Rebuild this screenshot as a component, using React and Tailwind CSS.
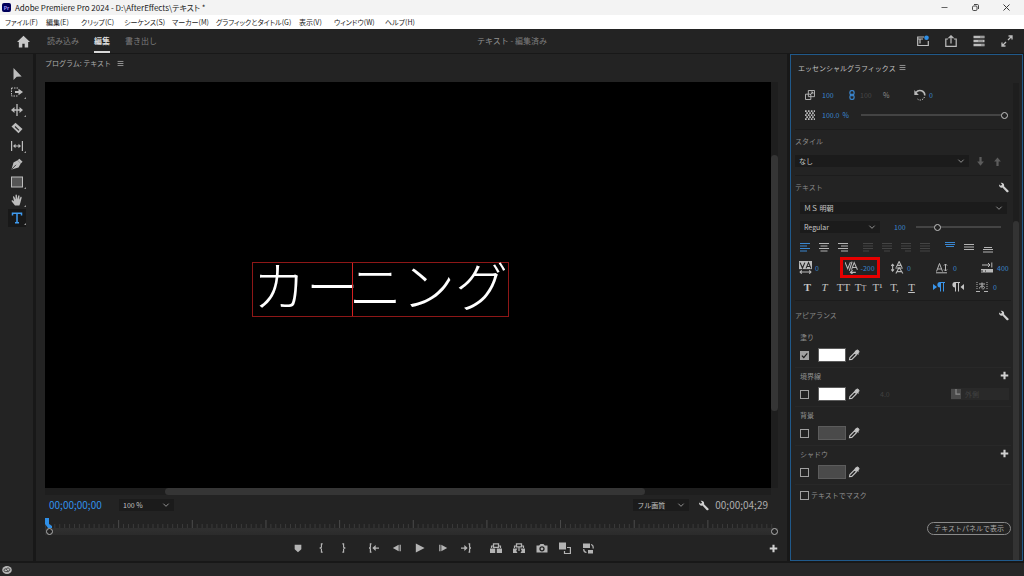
import { useState } from "react";

const menus = [
  "ファイル(F)",
  "編集(E)",
  "クリップ(C)",
  "シーケンス(S)",
  "マーカー(M)",
  "グラフィックとタイトル(G)",
  "表示(V)",
  "ウィンドウ(W)",
  "ヘルプ(H)",
];

function Icon({ size = 12, className = "", children }) {
  return (
    <svg
      width={size}
      height={size}
      viewBox="0 0 12 12"
      fill="none"
      stroke="currentColor"
      strokeWidth="1"
      className={`shrink-0 ${className}`}
      aria-hidden="true"
    >
      {children}
    </svg>
  );
}

function IconButton({ label, className = "", children }) {
  return (
    <button aria-label={label} className={`flex items-center justify-center ${className}`}>
      {children}
    </button>
  );
}

function Value({ children, className = "text-[#3a86cf]" }) {
  return <button className={`text-left text-[7px] leading-[10px] ${className}`}>{children}</button>;
}

function Select({ label, value, className = "" }) {
  return (
    <div className={`relative ${className}`}>
      <select
        aria-label={label}
        className="block h-[12px] w-full appearance-none bg-[#1b1b1b] pl-1 pr-4 text-[7px] leading-[12px] text-[#c4c4c4]"
      >
        <option>{value}</option>
      </select>
      <Icon size={8} className="pointer-events-none absolute right-1 top-[2px] text-[#9a9a9a]">
        <path d="M2 4l4 4 4-4" strokeWidth="1.4" />
      </Icon>
    </div>
  );
}

function Slider({ label, value, className = "" }) {
  return (
    <input
      type="range"
      aria-label={label}
      defaultValue={value}
      className={`h-[8px] min-w-0 appearance-none bg-transparent [&::-webkit-slider-runnable-track]:h-[2px] [&::-webkit-slider-runnable-track]:bg-[#444] [&::-webkit-slider-thumb]:-mt-[2px] [&::-webkit-slider-thumb]:size-[7px] [&::-webkit-slider-thumb]:appearance-none [&::-webkit-slider-thumb]:rounded-full [&::-webkit-slider-thumb]:border [&::-webkit-slider-thumb]:border-[#c4c4c4] [&::-webkit-slider-thumb]:bg-[#232323] ${className}`}
    />
  );
}

function Wrench() {
  return (
    <Icon size={11} className="text-[#d0d0d0]">
      <path
        d="M1.2 2.6l1.9 1.6 1.4-1.3L2.9.9C4.7.2 6.8 1.4 6.7 3.6l-.1.9 4.7 4.7c1 1.3-.9 2.8-1.9 1.7L4.9 6.1C2.9 6.9.7 5.1 1.2 2.6z"
        fill="currentColor"
        stroke="none"
      />
    </Icon>
  );
}

function Plus() {
  return (
    <Icon size={9} className="text-[#d0d0d0]">
      <path d="M6 1v10M1 6h10" strokeWidth="2.8" />
    </Icon>
  );
}

function Dropper() {
  return (
    <Icon size={12} className="text-[#c4c4c4]">
      <path d="M7 1.8l3.6 3.6M1.5 10.7l.4-2.2 4.7-4.7 1.9 1.9-4.7 4.7z" strokeWidth="1.1" />
      <path d="M6.8 3.2l1.7-1.9c1.1-1.1 3.3.9 2.2 2.2L8.9 5.3z" fill="currentColor" />
    </Icon>
  );
}

function Burger() {
  return (
    <Icon size={7} className="text-[#a8a8a8]">
      <path d="M1 2.5h10M1 6h10M1 9.5h10" strokeWidth="1.4" />
    </Icon>
  );
}

const tools = [
  ["選択", <path d="M2.5 0v12l3.200-3.200 5-.3z" fill="currentColor" stroke="none" />, false],
  [
    "トラックの前方選択",
    <>
      <path d="M.5 2h7M.5 2v8h7" strokeDasharray="1.5 1" />
      <path d="M4 6h4" strokeWidth="2" />
      <path d="M7.5 2.8L12 6 7.5 9.2z" fill="currentColor" stroke="none" />
    </>,
    true,
  ],
  [
    "リップル",
    <>
      <path d="M6 0v12M2 6h8" strokeWidth="1.3" />
      <path d="M0 6l3.5-3v6zM12 6L8.5 3v6z" fill="currentColor" stroke="none" />
    </>,
    true,
  ],
  [
    "レーザー",
    <>
      <path d="M.5 4.5L4.5.8l7 6.2-4 4.2z" fill="currentColor" stroke="none" />
      <path d="M4 4.5l4 3.8" stroke="#232323" strokeWidth="1.1" />
    </>,
    false,
  ],
  [
    "スリップ",
    <>
      <path d="M.6 1v10M11.4 1v10M3 6h6" strokeWidth="1.2" />
      <path d="M2 6l2.5-2.2v4.4zM10 6L7.5 3.8v4.4z" fill="currentColor" stroke="none" />
    </>,
    true,
  ],
  [
    "ペン",
    <>
      <path d="M.5 11.500L2.500 4.5l4-2.300 3.300 3.300-2.300 4z" fill="currentColor" stroke="none" />
      <path d="M7.5 1.500l3.200 3.200" strokeWidth="2.4" />
      <path d="M1 11l4-4.200" stroke="#232323" strokeWidth=".8" />
    </>,
    false,
  ],
  ["長方形", <rect x=".5" y="1" width="11" height="10" fill="#555" />, true],
  [
    "手のひら",
    <path
      d="M4 11.500L1 7.8C0 6.6 1.1 5.8 2 6.6l1.100 1L2 3.1c-.2-1 1-1.3 1.3-.4L4.6 5.5 4.5 1.3c0-1.100 1.3-1.100 1.4 0l.4 4L7.2 1.7c.2-.9 1.4-.7 1.3.3L8.2 5.8l1.2-2.500c.4-.8 1.5-.4 1.2.6L9.3 9.1 8.4 11.500z"
      fill="currentColor"
      stroke="none"
    />,
    true,
  ],
  [
    "横書き文字",
    <path d="M1.5 3.5V1.2h9v2.3M6 1.2v9.6M4 10.8h4" strokeWidth="1.5" />,
    true,
  ],
];

function Toolbar() {
  return (
    <nav className="flex w-[33px] shrink-0 flex-col items-center bg-[#232323] pt-[11px]">
      {tools.map(([label, art, more], i) => (
        <IconButton
          key={label}
          label={label}
          className={`relative h-[18px] w-[18px] ${
            i === 8 ? "bg-[#181818] text-[#3f9bf0]" : "text-[#bdbdbd]"
          }`}
        >
          <Icon size={12}>{art}</Icon>
          {more && (
            <svg
              width="2"
              height="2"
              className="absolute bottom-[2px] right-0 text-[#9a9a9a]"
              aria-hidden="true"
            >
              <path d="M2 0v2H0z" fill="currentColor" />
            </svg>
          )}
        </IconButton>
      ))}
    </nav>
  );
}

const markButtons = [
  ["マーカーを追加", <path d="M2 2h8v5.5L6 11 2 7.5z" fill="currentColor" stroke="none" />],
  ["インをマーク", <path d="M8 1H6.5v4L5 6l1.5 1v4H8" strokeWidth="1.4" />],
  ["アウトをマーク", <path d="M4 1h1.5v4L7 6 5.5 7v4H4" strokeWidth="1.4" />],
];
const playButtons = [
  [
    "インへ移動",
    <>
      <path d="M3 1H1.7v4L.5 6l1.2 1v4H3M6 6h6" strokeWidth="1.5" />
      <path d="M4 6l4-3.5v7z" fill="currentColor" stroke="none" />
    </>,
  ],
  [
    "1 フレーム前へ戻る",
    <>
      <path d="M1 6l7-4v8z" fill="currentColor" stroke="none" />
      <path d="M9.8 2v8" strokeWidth="1.5" />
    </>,
  ],
  ["再生", <path d="M1 .5L11.5 6 1 11.5z" fill="currentColor" stroke="none" />],
  [
    "1 フレーム先へ進む",
    <>
      <path d="M11 6L4 2v8z" fill="currentColor" stroke="none" />
      <path d="M2.2 2v8" strokeWidth="1.5" />
    </>,
  ],
  [
    "アウトへ移動",
    <>
      <path d="M9 1h1.3v4l1.2 1-1.2 1v4H9M0 6h6" strokeWidth="1.5" />
      <path d="M8 6L4 2.5v7z" fill="currentColor" stroke="none" />
    </>,
  ],
];
const editButtons = [
  [
    "リフト",
    <>
      <path d="M0 6.5h5.200V11H0zM6.800 6.5H12V11H6.800z" fill="currentColor" stroke="none" />
      <path d="M3.5 1.800h5v3.500h-5z" strokeWidth="1.3" />
      <path d="M1.5 6V4h2M10.5 6V4h-2" strokeWidth="1.2" />
    </>,
  ],
  [
    "抽出",
    <>
      <path
        d="M0 6.5h4.500L3.200 8.700 4.5 11H0zM12 6.5H7.5l1.300 2.200L7.5 11H12z"
        fill="currentColor"
        stroke="none"
      />
      <path d="M3.5 1.800h5v3h-5z" strokeWidth="1.3" />
      <path d="M6 5v4M1.500 6V4h2M10.5 6V4h-2" strokeWidth="1.2" />
    </>,
  ],
  [
    "フレームを書き出し",
    <>
      <path d="M.5 3.5h2.700L4.5 2h3l1.300 1.500h2.700v7H.5z" fill="currentColor" stroke="none" />
      <circle cx="6" cy="6.8" r="2" stroke="#232323" strokeWidth="1.3" />
    </>,
  ],
  [
    "比較表示",
    <>
      <path d="M0 .5h7V7.500H0z" fill="currentColor" stroke="none" />
      <path d="M8 5.5h3.400v6H5.5V9" strokeWidth="1.2" />
    </>,
  ],
  [
    "プロキシの切り替え",
    <>
      <path d="M1 1.5h7V6H1zM6 8h5v3.500H6z" fill="currentColor" stroke="none" />
      <path d="M9 2.5c2 .5 2.500 2 2 4M4.5 10.5C2.500 10 1.500 9 1.800 7" strokeWidth="1.2" />
    </>,
  ],
];

function Group({ items, size = 10 }) {
  return (
    <div className="flex">
      {items.map(([label, art]) => (
        <IconButton key={label} label={label} className="h-[14px] w-[23px]">
          <Icon size={size}>{art}</Icon>
        </IconButton>
      ))}
    </div>
  );
}

function Ruler() {
  const ticks = Array.from({ length: 149 }, (_, i) => i * 4.89);
  return (
    <div className="mt-[6px]">
      <div className="relative h-[11px] overflow-hidden">
        <svg width="100%" height="11" viewBox="0 0 730 11" preserveAspectRatio="none" aria-hidden="true">
          {ticks.map((x, i) => (
            <path
              key={i}
              d={`M${x} ${i % 15 === 0 && i > 0 ? 3 : 7}V11`}
              stroke={i % 15 === 0 ? "#4b4b4b" : "#3a3a3a"}
            />
          ))}
        </svg>
        <svg width="8" height="10" className="absolute left-0 top-[1px]" aria-hidden="true">
          <path d="M0 0h4v6l3 2v2H3L0 6z" fill="#2f8fe6" />
        </svg>
      </div>
      <div className="flex h-[7px] items-center justify-between bg-gradient-to-b from-[#303030] to-[#2b2b2b]">
        <span className="ml-[1px] size-[7px] rounded-full border border-[#b0b0b0] bg-[#232323]" />
        <span className="size-[7px] rounded-full border border-[#b0b0b0] bg-[#232323]" />
      </div>
    </div>
  );
}

function ProgramMonitor() {
  return (
    <section className="flex min-w-0 flex-1 flex-col bg-[#232323] px-[9px]">
      <header className="flex h-[28px] items-start gap-[6px] pt-[3px] text-[7px] leading-[12px] text-[#adadad]">
        <h2>プログラム: テキスト</h2>
        <span className="pt-[3px]">
          <Burger />
        </span>
      </header>

      <div className="flex min-h-0 flex-1">
        <div className="relative flex-1 bg-black">
          {/* selected title, caret sits between the two runs */}
          <div className="absolute left-[28.5%] top-[44.4%] flex h-[55px] border border-[#8e1717] font-['Liberation_Serif','Noto_Sans_CJK_JP',serif] text-[53px] font-light leading-[52px] text-white">
            <span className="w-[100px] whitespace-nowrap">カー</span>
            <span className="-ml-px border-l border-[#d42020]" />
            <span className="-ml-[4px] whitespace-nowrap">ニング</span>
          </div>
        </div>
        <div className="flex w-[7px] flex-col bg-[#1e1e1e]">
          <span className="h-[18%]" />
          <span className="h-[63%] rounded-sm bg-[#353535]" />
        </div>
      </div>
      <div className="mr-[7px] flex h-[7px] bg-[#1e1e1e]">
        <span className="w-[16.5%]" />
        <span className="w-[66.2%] rounded-sm bg-[#353535]" />
      </div>

      <div className="mt-[4px] flex h-[12px] items-center pl-[4px] pr-[10px]">
        <button className="w-[70px] text-left text-[10px] leading-[12px] text-[#3191ea]">00;00;00;00</button>
        <Select label="ズームレベル" value="100 %" className="w-[55px]" />
        <Select label="再生時の解像度" value="フル画質" className="ml-auto w-[56px]" />
        <IconButton label="設定" className="ml-[9px]">
          <Wrench />
        </IconButton>
        <span className="ml-[6px] text-[10px] leading-[12px] text-[#adadad]">00;00;04;29</span>
      </div>

      <Ruler />

      <div className="my-[6px] flex items-center text-[#b4b4b4]">
        <div className="ml-[33%] flex gap-[7px]">
          <Group items={markButtons} />
          <Group items={playButtons} />
          <Group items={editButtons} size={12} />
        </div>
        <IconButton label="ボタンエディター" className="ml-auto">
          <Plus />
        </IconButton>
      </div>
    </section>
  );
}

const aligns = [
  [
    ["左揃え", "M1 2.5h10M1 5h7M1 7.5h10M1 10h7", "text-[#3a86cf]"],
    ["中央揃え", "M1 2.5h10M2.5 5h7M1 7.5h10M2.5 10h7", "text-[#b4b4b4]"],
    ["右揃え", "M1 2.5h10M4 5h7M1 7.5h10M4 10h7", "text-[#b4b4b4]"],
  ],
  [
    ["均等配置左", "M1 2.5h10M1 5h10M1 7.5h10M1 10h6", "text-[#444]"],
    ["均等配置中央", "M1 2.5h10M1 5h10M1 7.5h10M3 10h6", "text-[#444]"],
    ["均等配置右", "M1 2.5h10M1 5h10M1 7.5h10M5 10h6", "text-[#444]"],
    ["両端揃え", "M1 2.5h10M1 5h10M1 7.5h10M1 10h10", "text-[#444]"],
  ],
  [
    ["上揃え", "M1 1.5h10M1 3.5h10M2 5.5h8", "text-[#3a86cf]"],
    ["垂直中央", "M1 3.5h10M1 6h10M1 8.5h10", "text-[#b4b4b4]"],
    ["下揃え", "M2 6.5h8M1 8.5h10M1 11h10", "text-[#b4b4b4]"],
  ],
];

const glyph = "font-['Liberation_Serif',serif] text-[11px] leading-[12px] text-[#c4c4c4]";

function TypeStyles() {
  return (
    <div className="flex h-[20px] items-center pl-[8px]">
      <div className="flex items-baseline">
        <button aria-label="太字" className={`w-[17px] font-bold ${glyph}`}>T</button>
        <button aria-label="斜体" className={`w-[17px] italic ${glyph}`}>T</button>
        <button className={`ml-[2px] w-[17px] ${glyph}`}>TT</button>
        <button className={`w-[17px] ${glyph}`}>
          T<span className="text-[8px] leading-none">T</span>
        </button>
        <button aria-label="上付き" className={`w-[17px] ${glyph}`}>T¹</button>
        <button aria-label="下付き" className={`w-[17px] ${glyph}`}>T,</button>
        <button aria-label="下線" className={`w-[17px] underline underline-offset-1 ${glyph}`}>T</button>
      </div>
      <IconButton label="左から右" className="ml-[9px] w-[19px] text-[#3a95ea]">
        <Icon size={12}>
          <path
            d="M0 3l4 3-4 3zM8 1.5v9H7v-4C3.5 6.5 3.5 1 7 1h5v1h-1v8.500h-1V2H8z"
            fill="currentColor"
            stroke="none"
          />
        </Icon>
      </IconButton>
      <IconButton label="右から左" className="w-[19px] text-[#c4c4c4]">
        <Icon size={12}>
          <path
            d="M12 3L8.5 6l3.5 3zM4 1.5v9H3v-4C-.5 6.5-.5 1 3 1h5v1H7v8.500H6V2H4z"
            fill="currentColor"
            stroke="none"
          />
        </Icon>
      </IconButton>
      <div className="ml-[9px] flex items-center gap-[5px]">
        <Icon size={12} className="text-[#b4b4b4]">
          <path d="M1 1v8M11 1v8" strokeDasharray="1 1" />
          <path d="M3 3h6M6 1.5v6M3.5 7.5c0-3 5-3 5-1 0 1.5-2 1.5-2 1.5M0 10.5h4M8 10.5h4" />
        </Icon>
        <Value>0</Value>
      </div>
    </div>
  );
}

function Spacing() {
  return (
    <div className="grid h-[20px] grid-cols-[41px_51px_45px_45px_1fr] items-center pl-[8px] text-[#b9b9b9]">
      <div className="flex items-center gap-[3px]">
        <Icon size={13}>
          <path d="M0 0h12v7.500H0z" fill="currentColor" stroke="none" />
          <path d="M1 1.5l2.200 5 2.200-5M6.5 6.8l2.300-5.300L11 6.8M7.300 5h3" stroke="#232323" />
          <path d="M1 10.2h10M2.5 8.700L1 10.2l1.500 1.500M9.5 8.700l1.500 1.500-1.500 1.500" />
        </Icon>
        <Value>0</Value>
      </div>
      <div className="flex h-[21px] w-[40px] items-center justify-center gap-[2px] border-[3px] border-[#e60000]">
        <Icon size={13}>
          <path d="M0 1l2.500 6L5 1M6 8l2.500-6.500 3 6.500M7 6h3.500M6.5.5L4 9" />
          <path d="M5 10.500h5M7 8.500l-2 2 2 1.500" />
        </Icon>
        <Value>-200</Value>
      </div>
      <div className="flex items-center gap-[3px]">
        <Icon size={13}>
          <path d="M5 5.500L7.500.5l2.500 5M6 4h3M4.500 11.500l3-5.500 3.500 5.500M5.500 9.800h4.200M4 6.500h7M1.500 3v6M.2 4.500L1.500 3l1.300 1.500M.2 7.800l1.300 1.500 1.300-1.500" />
        </Icon>
        <Value>0</Value>
      </div>
      <div className="flex items-center gap-[5px]">
        <Icon size={12}>
          <path d="M.5 9.500l3-8 3 8M1.500 7h4M0 10.800h11M9.500 2v7M8 3.500L9.500 2 11 3.500M8 7.500L9.500 9 11 7.500" />
        </Icon>
        <Value>0</Value>
      </div>
      <div className="flex items-center gap-[4px]">
        <Icon size={12}>
          <path d="M1 3h8M7 1l2 2-2 2M10.800.5v5" />
          <path d="M0 7h12v3.500H0z" fill="currentColor" stroke="none" />
          <path d="M0 9h2M4 9h1" stroke="#232323" />
        </Icon>
        <Value>400</Value>
      </div>
    </div>
  );
}

function Paint({ title, checked, swatch, add, children }) {
  const [on, setOn] = useState(Boolean(checked));
  return (
    <div className="h-[39px] border-b border-[#282828]">
      <div className="flex h-[15px] items-center justify-between pl-[5px] pr-[2px]">
        <h4 className="text-[7px] leading-[10px] text-[#909090]">{title}</h4>
        {add && (
          <IconButton label={`${title}を追加`}>
            <Plus />
          </IconButton>
        )}
      </div>
      <div className="flex h-[22px] items-center pl-[5px]">
        <input
          type="checkbox"
          aria-label={title}
          checked={on}
          onChange={() => setOn(!on)}
          className="peer size-[9px] appearance-none border border-[#a0a0a0] checked:bg-[#a0a0a0]"
        />
        <Icon size={9} className="pointer-events-none -ml-[9px] text-[#1b1b1b] opacity-0 peer-checked:opacity-100">
          <path d="M2.5 6.2L5 8.7l4.700-5.500" strokeWidth="1.6" />
        </Icon>
        <button aria-label={`${title}のカラー`} className={`ml-[9px] h-[14px] w-[28px] border border-[#5c5c5c] ${swatch}`} />
        <IconButton label="スポイト" className="ml-[2px]">
          <Dropper />
        </IconButton>
        {children}
      </div>
    </div>
  );
}

function EssentialGraphics() {
  return (
    <section className="flex w-[233px] shrink-0 border border-[#20598a] bg-[#232323]">
      <div className="flex min-w-0 flex-1 flex-col pl-[4px] pr-[2px]">
        <header className="flex h-[25px] items-center gap-[3px] pl-[3px]">
          <h2 className="text-[7px] leading-[10px] text-[#c0c0c0]">エッセンシャルグラフィックス</h2>
          <Burger />
        </header>

        <div className="border-b border-[#1c1c1c] pt-[5px] pb-[4px] pl-[10px]">
          <div className="flex h-[20px] items-center">
            <Icon size={10} className="text-[#b9b9b9]">
              <path d="M4 .6h7.400V8H4zM.6 5H7v6.400H.6zM6 6l3.500-3.500M7 2.500h2.500V5" strokeWidth="1.1" />
            </Icon>
            <span className="ml-[7px] flex w-[25px]">
              <Value>100</Value>
            </span>
            <IconButton label="縦横比を固定" className="text-[#3a86cf]">
              <Icon size={10}>
                <rect x="3.5" y=".8" width="5" height="5" rx="2" strokeWidth="1.5" />
                <rect x="3.5" y="6.2" width="5" height="5" rx="2" strokeWidth="1.5" />
                <path d="M6 4v4" />
              </Icon>
            </IconButton>
            <span className="ml-[3px] flex w-[23px]">
              <Value className="text-[#474747]">100</Value>
            </span>
            <span className="w-[31px] text-[7px] leading-[10px] text-[#8e8e8e]">%</span>
            <Icon size={12} className="text-[#b9b9b9]">
              <path d="M2 3.5C5-.5 11 2 10.800 6.500" strokeWidth="1.5" />
              <path d="M10.500 8C9 11.500 5 12 3 9.500" strokeDasharray="1.3 1.1" />
              <path d="M.3 1v5h4.500z" fill="currentColor" stroke="none" />
            </Icon>
            <span className="ml-[3px] flex">
              <Value>0</Value>
            </span>
          </div>
          <div className="flex h-[20px] items-center">
            <Icon size={10} className="text-[#b9b9b9]">
              <path
                d="M0 1.3h12M1.5 3.7h12M0 6.1h12M1.5 8.5h12M0 10.900h12"
                strokeWidth="2"
                strokeDasharray="2 1.5"
              />
            </Icon>
            <span className="ml-[7px] flex w-[39px]">
              <Value>100.0&nbsp; %</Value>
            </span>
            <Slider label="不透明度" value={100} className="mr-[3px] flex-1" />
          </div>
        </div>

        <div className="border-b border-[#1c1c1c] pb-[5px]">
          <h3 className="flex h-[22px] items-center text-[7px] leading-[10px] text-[#8a8a8a]">スタイル</h3>
          <div className="flex h-[18px] items-center">
            <Select label="スタイル" value="なし" className="w-[174px]" />
            <IconButton label="プッシュ" className="ml-[7px] text-[#5c5c5c]">
              <Icon size={9}>
                <path d="M6 0v7" strokeWidth="3" />
                <path d="M1.5 6h9L6 11.500z" fill="currentColor" stroke="none" />
              </Icon>
            </IconButton>
            <IconButton label="同期" className="ml-[8px] text-[#5c5c5c]">
              <Icon size={9}>
                <path d="M6 12V5" strokeWidth="3" />
                <path d="M1.5 6h9L6 .5z" fill="currentColor" stroke="none" />
              </Icon>
            </IconButton>
          </div>
        </div>

        <div className="border-b border-[#1c1c1c] pb-[3px]">
          <div className="flex h-[22px] items-center justify-between pr-[2px]">
            <h3 className="text-[7px] leading-[10px] text-[#8a8a8a]">テキスト</h3>
            <IconButton label="テキスト設定">
              <Wrench />
            </IconButton>
          </div>
          <div className="flex h-[19px] items-center pl-[5px]">
            <Select label="フォント" value="ＭＳ 明朝" className="mr-[4px] flex-1" />
          </div>
          <div className="flex h-[20px] items-center pl-[5px]">
            <Select label="フォントスタイル" value="Regular" className="w-[80px]" />
            <span className="ml-[14px] flex w-[22px]">
              <Value>100</Value>
            </span>
            <Slider label="フォントサイズ" value={23} className="mr-[10px] flex-1" />
          </div>
          <div className="flex h-[20px] items-center gap-[6px]">
            {aligns.map((group, i) => (
              <div key={i} className="flex">
                {group.map(([label, d, color]) => (
                  <IconButton key={label} label={label} className={`w-[19px] ${color}`}>
                    <Icon size={12}>
                      <path d={d} />
                    </Icon>
                  </IconButton>
                ))}
              </div>
            ))}
          </div>
          <div className="-ml-[4px]">
            <Spacing />
            <TypeStyles />
          </div>
        </div>

        <div className="flex h-[28px] items-center justify-between pr-[2px]">
          <h3 className="text-[7px] leading-[10px] text-[#8a8a8a]">アピアランス</h3>
          <IconButton label="アピアランス設定">
            <Wrench />
          </IconButton>
        </div>
        <Paint title="塗り" checked swatch="bg-white" />
        <Paint title="境界線" swatch="bg-white" add>
          <span className="ml-[20px] text-[7px] leading-[10px] text-[#414141]">4.0</span>
          <button className="ml-auto mr-[2px] flex h-[12px] w-[58px] items-center gap-[4px] bg-[#292929] text-[7px] leading-[10px] text-[#424242]">
            <Icon size={10}>
              <path d="M0 0h12v12H0z" fill="#4a4a4a" stroke="none" />
              <path d="M6 0v6h5" stroke="#8a8a8a" strokeWidth="1.5" />
            </Icon>
            外側
          </button>
        </Paint>
        <Paint title="背景" swatch="bg-[#4a4a4a]" />
        <Paint title="シャドウ" swatch="bg-[#4a4a4a]" add />
        <label className="flex h-[20px] items-center gap-[2px] pl-[5px] text-[7px] leading-[10px] text-[#909090]">
          <input type="checkbox" className="size-[9px] appearance-none border border-[#a0a0a0]" />
          テキストでマスク
        </label>
        <div className="mt-[17px] flex justify-end">
          <button className="h-[13px] rounded-full border border-[#8a8a8a] px-[6px] text-[7px] leading-[11px] text-[#a8a8a8]">
            テキストパネルで表示
          </button>
        </div>
      </div>
      <div className="mt-[28px] mr-[3px] flex w-[6px] flex-col bg-[#1e1e1e]">
        <span className="h-[29%]" />
        <span className="flex-1 rounded-t-sm bg-[#333]" />
      </div>
    </section>
  );
}

function App() {
  return (
    <div className="flex min-h-screen flex-col bg-[#181818] font-['Noto_Sans_CJK_JP',sans-serif] text-[#b0b0b0]">
      <div className="flex h-[15px] items-center bg-[#f3f3f3] pl-[2px] text-[#1b1b1b]">
        <span className="flex size-[9px] items-center justify-center rounded-xs bg-[#00005b] text-[5px] font-bold leading-none text-[#b0a0ff]">
          Pr
        </span>
        <h1 className="ml-[4px] text-[8px] leading-[12px] [font-feature-settings:'palt']">
          Adobe Premiere Pro 2024 - D:\AfterEffects\テキスト *
        </h1>
        <div className="ml-auto flex gap-[22px] pr-[13px] text-[#333]">
          <IconButton label="最小化">
            <Icon size={9}>
              <path d="M2 6h8" />
            </Icon>
          </IconButton>
          <IconButton label="元に戻す">
            <Icon size={9}>
              <rect x="2" y="4" width="6" height="6" rx="1.5" strokeWidth="1.2" />
              <path d="M4 2h4.500Q10 2 10 3.500V8" strokeWidth="1.2" />
            </Icon>
          </IconButton>
          <IconButton label="閉じる">
            <Icon size={9}>
              <path d="M2 2l8 8M10 2l-8 8" strokeWidth="1.3" />
            </Icon>
          </IconButton>
        </div>
      </div>

      <nav className="grid h-[14px] grid-cols-[41px_35px_43px_48px_44px_83px_35px_51px_1fr] items-center bg-white pl-[5px] text-[7px] leading-[12px] text-[#1b1b1b] [font-feature-settings:'palt']">
        {menus.map((m) => (
          <button key={m} className="whitespace-nowrap text-left">
            {m}
          </button>
        ))}
      </nav>

      <header className="relative flex h-[24px] items-center bg-[#232323] pl-[17px] text-[8px] leading-[12px] text-[#7d7d7d]">
        <IconButton label="ホーム" className="mr-[17px] text-[#c8c8c8]">
          <Icon size={13}>
            <path d="M6 .8L0 6.500h1.700v5h3.200V8h2.200v3.500h3.200v-5H12z" fill="currentColor" stroke="none" />
          </Icon>
        </IconButton>
        <div className="flex h-full gap-[15px]">
          <button>読み込み</button>
          <button className="border-b-2 border-[#d8d8d8] pt-[2px] font-bold text-[#dcdcdc]">編集</button>
          <button>書き出し</button>
        </div>
        <p className="absolute left-1/2 -translate-x-1/2">
          <span className="text-[#929292]">テキスト</span> - 編集済み
        </p>
        <div className="ml-auto flex gap-[16px] pr-[11px] text-[#bdbdbd]">
          <IconButton label="ワークスペース">
            <Icon size={12}>
              <path d="M7 2H.7v8.500h10.600V6M3 4v4.500M1 4h5" strokeWidth="1.2" />
              <circle cx="9.5" cy="2.8" r="2.3" fill="#2f8fe6" stroke="none" />
            </Icon>
          </IconButton>
          <IconButton label="クイック書き出し">
            <Icon size={12}>
              <path d="M3 4H.8v7.300h10.400V4H9M6 8.500V1M3.500 3.200L6 .8l2.500 2.400" strokeWidth="1.2" />
            </Icon>
          </IconButton>
          <IconButton label="進行状況">
            <Icon size={12}>
              <path d="M.5 2h11M.5 6h11M.5 10h11" strokeWidth="2.4" />
              <path d="M7 2h4M5 6h5M8 10h3" stroke="#777" />
            </Icon>
          </IconButton>
          <IconButton label="全画面">
            <Icon size={12}>
              <path d="M7 5l4-4M7.500 1H11v3.500M5 7l-4 4M1 7.500V11h3.500" strokeWidth="1.3" />
            </Icon>
          </IconButton>
        </div>
      </header>

      <main className="mt-[1px] flex min-h-0 flex-1 gap-[3px] pr-[1px]">
        <Toolbar />
        <ProgramMonitor />
        <EssentialGraphics />
      </main>

      <footer className="mt-[2px] flex h-[13px] items-center bg-[#262626] pl-[2px]">
        <svg width="10" height="8" viewBox="0 0 12 10" aria-hidden="true">
          <ellipse cx="6" cy="5" rx="6" ry="5" fill="#b9b9b9" />
          <path
            d="M8 7H4C1.500 7 2 3.500 4 3.500 5 3.500 6 5 7 6M5 4c1-2.500 5-1.500 4.500 1.200C9 6.500 8 6.500 7.500 6"
            fill="none"
            stroke="#262626"
          />
        </svg>
      </footer>
    </div>
  );
}

export default App;
